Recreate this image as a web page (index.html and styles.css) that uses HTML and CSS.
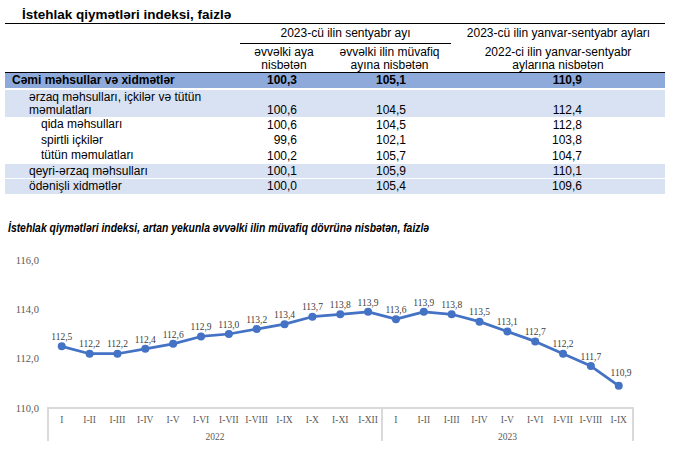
FILE: index.html
```html
<!DOCTYPE html>
<html lang="az">
<head>
<meta charset="utf-8">
<title>İstehlak qiymətləri indeksi</title>
<link rel="stylesheet" href="styles.css">
</head>
<body>
<main class="doc">
  <section class="table-block">
    <div class="t-title">İstehlak qiymətləri indeksi, faizlə</div>
    <div class="thead">
      <div class="h-empty"></div>
      <div class="h-group">
        <div class="h-top ruled">2023-cü ilin sentyabr ayı</div>
        <div class="h-subs">
          <div class="h-sub">əvvəlki aya<br>nisbətən</div>
          <div class="h-sub">əvvəlki ilin müvafiq<br>ayına nisbətən</div>
        </div>
      </div>
      <div class="h-col3">
        <div class="h-top">2023-cü ilin yanvar-sentyabr ayları</div>
        <div class="h-sub">2022-ci ilin yanvar-sentyabr<br>aylarına nisbətən</div>
      </div>
    </div>

    <div class="row total">
      <div class="lbl l0">Cəmi məhsullar və xidmətlər</div>
      <div class="v1">100,3</div><div class="v2">105,1</div><div class="v3">110,9</div>
    </div>
    <div class="row shade tall gap2">
      <div class="lbl l1">ərzaq məhsulları, içkilər və tütün<br>məmulatları</div>
      <div class="v1">100,6</div><div class="v2">104,5</div><div class="v3">112,4</div>
    </div>
    <div class="row sub">
      <div class="lbl l2">qida məhsulları</div>
      <div class="v1">100,6</div><div class="v2">104,5</div><div class="v3">112,8</div>
    </div>
    <div class="row sub">
      <div class="lbl l2">spirtli içkilər</div>
      <div class="v1">99,6</div><div class="v2">102,1</div><div class="v3">103,8</div>
    </div>
    <div class="row sub">
      <div class="lbl l2">tütün məmulatları</div>
      <div class="v1">100,2</div><div class="v2">105,7</div><div class="v3">104,7</div>
    </div>
    <div class="row shade q">
      <div class="lbl l1">qeyri-ərzaq məhsulları</div>
      <div class="v1">100,1</div><div class="v2">105,9</div><div class="v3">110,1</div>
    </div>
    <div class="row shade gap1">
      <div class="lbl l1">ödənişli xidmətlər</div>
      <div class="v1">100,0</div><div class="v2">105,4</div><div class="v3">109,6</div>
    </div>
  </section>

  <section class="chart-block">
    <h2 class="c-title">İstehlak qiymətləri indeksi, artan yekunla əvvəlki ilin müvafiq dövrünə nisbətən, faizlə</h2>
    <svg class="chart" width="682" height="215" viewBox="0 248 682 215" xmlns="http://www.w3.org/2000/svg">
      <g class="yax">
        <text x="39" y="263.5">116,0</text>
        <text x="39" y="312.8">114,0</text>
        <text x="39" y="362.2">112,0</text>
        <text x="39" y="411.5">110,0</text>
      </g>
      <g class="axis">
        <line x1="47" y1="408" x2="634" y2="408"/>
        <line x1="48" y1="408" x2="48" y2="441"/>
        <line x1="382" y1="408" x2="382" y2="441"/>
        <line x1="633" y1="408" x2="633" y2="441"/>
      </g>
      <polyline class="series" points="61.75,346.33 89.6,353.73 117.45,353.73 145.3,348.8 173.15,343.87 201,336.47 228.85,334 256.7,329.07 284.55,324.13 312.4,316.73 340.25,314.27 368.1,311.8 395.95,319.2 423.8,311.8 451.65,314.27 479.5,321.67 507.35,331.53 535.2,341.4 563.05,353.73 590.9,366.07 618.75,385.8"/>
      <g class="dots">
        <circle cx="61.75" cy="346.33" r="4"/>
        <circle cx="89.6" cy="353.73" r="4"/>
        <circle cx="117.45" cy="353.73" r="4"/>
        <circle cx="145.3" cy="348.8" r="4"/>
        <circle cx="173.15" cy="343.87" r="4"/>
        <circle cx="201" cy="336.47" r="4"/>
        <circle cx="228.85" cy="334" r="4"/>
        <circle cx="256.7" cy="329.07" r="4"/>
        <circle cx="284.55" cy="324.13" r="4"/>
        <circle cx="312.4" cy="316.73" r="4"/>
        <circle cx="340.25" cy="314.27" r="4"/>
        <circle cx="368.1" cy="311.8" r="4"/>
        <circle cx="395.95" cy="319.2" r="4"/>
        <circle cx="423.8" cy="311.8" r="4"/>
        <circle cx="451.65" cy="314.27" r="4"/>
        <circle cx="479.5" cy="321.67" r="4"/>
        <circle cx="507.35" cy="331.53" r="4"/>
        <circle cx="535.2" cy="341.4" r="4"/>
        <circle cx="563.05" cy="353.73" r="4"/>
        <circle cx="590.9" cy="366.07" r="4"/>
        <circle cx="618.75" cy="385.8" r="4"/>
      </g>
      <g class="vals">
        <text x="61.75" y="340">112,5</text>
        <text x="89.6" y="347.4">112,2</text>
        <text x="117.45" y="347.4">112,2</text>
        <text x="145.3" y="342.5">112,4</text>
        <text x="173.15" y="337.5">112,6</text>
        <text x="201" y="330.1">112,9</text>
        <text x="228.85" y="327.7">113,0</text>
        <text x="256.7" y="322.7">113,2</text>
        <text x="284.55" y="317.8">113,4</text>
        <text x="312.4" y="310.4">113,7</text>
        <text x="340.25" y="307.9">113,8</text>
        <text x="368.1" y="305.5">113,9</text>
        <text x="395.95" y="312.9">113,6</text>
        <text x="423.8" y="305.5">113,9</text>
        <text x="451.65" y="307.9">113,8</text>
        <text x="479.5" y="315.3">113,5</text>
        <text x="507.35" y="325.2">113,1</text>
        <text x="535.2" y="335">112,7</text>
        <text x="563.05" y="347.4">112,2</text>
        <text x="590.9" y="359.7">111,7</text>
        <text x="621" y="376">110,9</text>
      </g>
      <g class="cats">
        <text x="61.75" y="422.5">I</text>
        <text x="89.6" y="422.5">I-II</text>
        <text x="117.45" y="422.5">I-III</text>
        <text x="145.3" y="422.5">I-IV</text>
        <text x="173.15" y="422.5">I-V</text>
        <text x="201" y="422.5">I-VI</text>
        <text x="228.85" y="422.5">I-VII</text>
        <text x="256.7" y="422.5">I-VIII</text>
        <text x="284.55" y="422.5">I-IX</text>
        <text x="312.4" y="422.5">I-X</text>
        <text x="340.25" y="422.5">I-XI</text>
        <text x="368.1" y="422.5">I-XII</text>
        <text x="395.95" y="422.5">I</text>
        <text x="423.8" y="422.5">I-II</text>
        <text x="451.65" y="422.5">I-III</text>
        <text x="479.5" y="422.5">I-IV</text>
        <text x="507.35" y="422.5">I-V</text>
        <text x="535.2" y="422.5">I-VI</text>
        <text x="563.05" y="422.5">I-VII</text>
        <text x="590.9" y="422.5">I-VIII</text>
        <text x="618.75" y="422.5">I-IX</text>
        <text x="215" y="439.5">2022</text>
        <text x="507.5" y="439.5">2023</text>
      </g>
    </svg>
  </section>
</main>
</body>
</html>
```

FILE: styles.css
```css
* { box-sizing: border-box; }

html, body {
  margin: 0;
  padding: 0;
  background: #ffffff;
}

body {
  font-family: "Liberation Sans", Arial, sans-serif;
  color: #000000;
  font-size: 12px;
  width: 682px;
  height: 463px;
  overflow: hidden;
}

.table-block {
  width: 660px;
  margin-left: 5px;
}

.t-title {
  height: 24px;
  padding-top: 7px;
  padding-left: 17px;
  font-size: 13.5px;
  font-weight: bold;
  line-height: 16px;
  border-bottom: 1px solid #000;
}

.thead {
  display: grid;
  grid-template-columns: 235px 211px 214px;
  border-bottom: 1px solid #000;
}

.h-top {
  height: 20px;
  line-height: 19px;
  text-align: center;
  white-space: nowrap;
  border-bottom: 1px solid transparent;
}

.h-top.ruled { border-bottom-color: #000; }

.h-subs {
  display: grid;
  grid-template-columns: 88px 123px;
}

.h-sub {
  padding-top: 1.5px;
  height: 28px;
  line-height: 13.5px;
  text-align: center;
  white-space: nowrap;
}

.h-col3 .h-top { padding-left: 1px; }

.row {
  display: grid;
  grid-template-columns: 235px 100px 111px 214px;
  height: 15px;
  line-height: 15px;
}

.row.total {
  background: #8eaadb;
  font-weight: bold;
}

.row.shade { background: #d9e2f3; }
.row.tall { height: 27px; line-height: 13px; padding-top: 1px; }
.row.gap2 { margin-top: 2px; }
.row.gap1 { margin-top: 1px; }
.row.sub { height: 15.67px; }
.row.q { height: 14px; line-height: 14px; }

.lbl { white-space: nowrap; }
.l0 { padding-left: 7px; }
.l1 { padding-left: 24px; }
.l2 { padding-left: 36px; }

.v1, .v2, .v3 { text-align: right; align-self: end; }
.v1 { padding-right: 43px; }
.v2 { padding-right: 45px; }
.v3 { padding-right: 83px; }

.chart-block { width: 682px; }

.c-title {
  margin: 27px 0 0 8px;
  font-family: "Liberation Sans", Arial, sans-serif;
  font-size: 12px;
  font-weight: bold;
  font-style: italic;
  line-height: 14px;
  white-space: nowrap;
  transform: scaleX(0.865);
  transform-origin: left center;
}

.chart {
  display: block;
  margin-top: 13px;
  font-family: "Liberation Serif", "Times New Roman", serif;
}

.yax text {
  font-size: 10.5px;
  fill: #595959;
  text-anchor: end;
}

.axis line {
  stroke: #d9d9d9;
  stroke-width: 2;
}

.series {
  fill: none;
  stroke: #4472c4;
  stroke-width: 2.75;
  stroke-linejoin: round;
}

.dots circle { fill: #4472c4; }

.vals text {
  font-size: 9.5px;
  fill: #404040;
  text-anchor: middle;
}

.cats text {
  font-size: 9.5px;
  fill: #595959;
  text-anchor: middle;
}
```
